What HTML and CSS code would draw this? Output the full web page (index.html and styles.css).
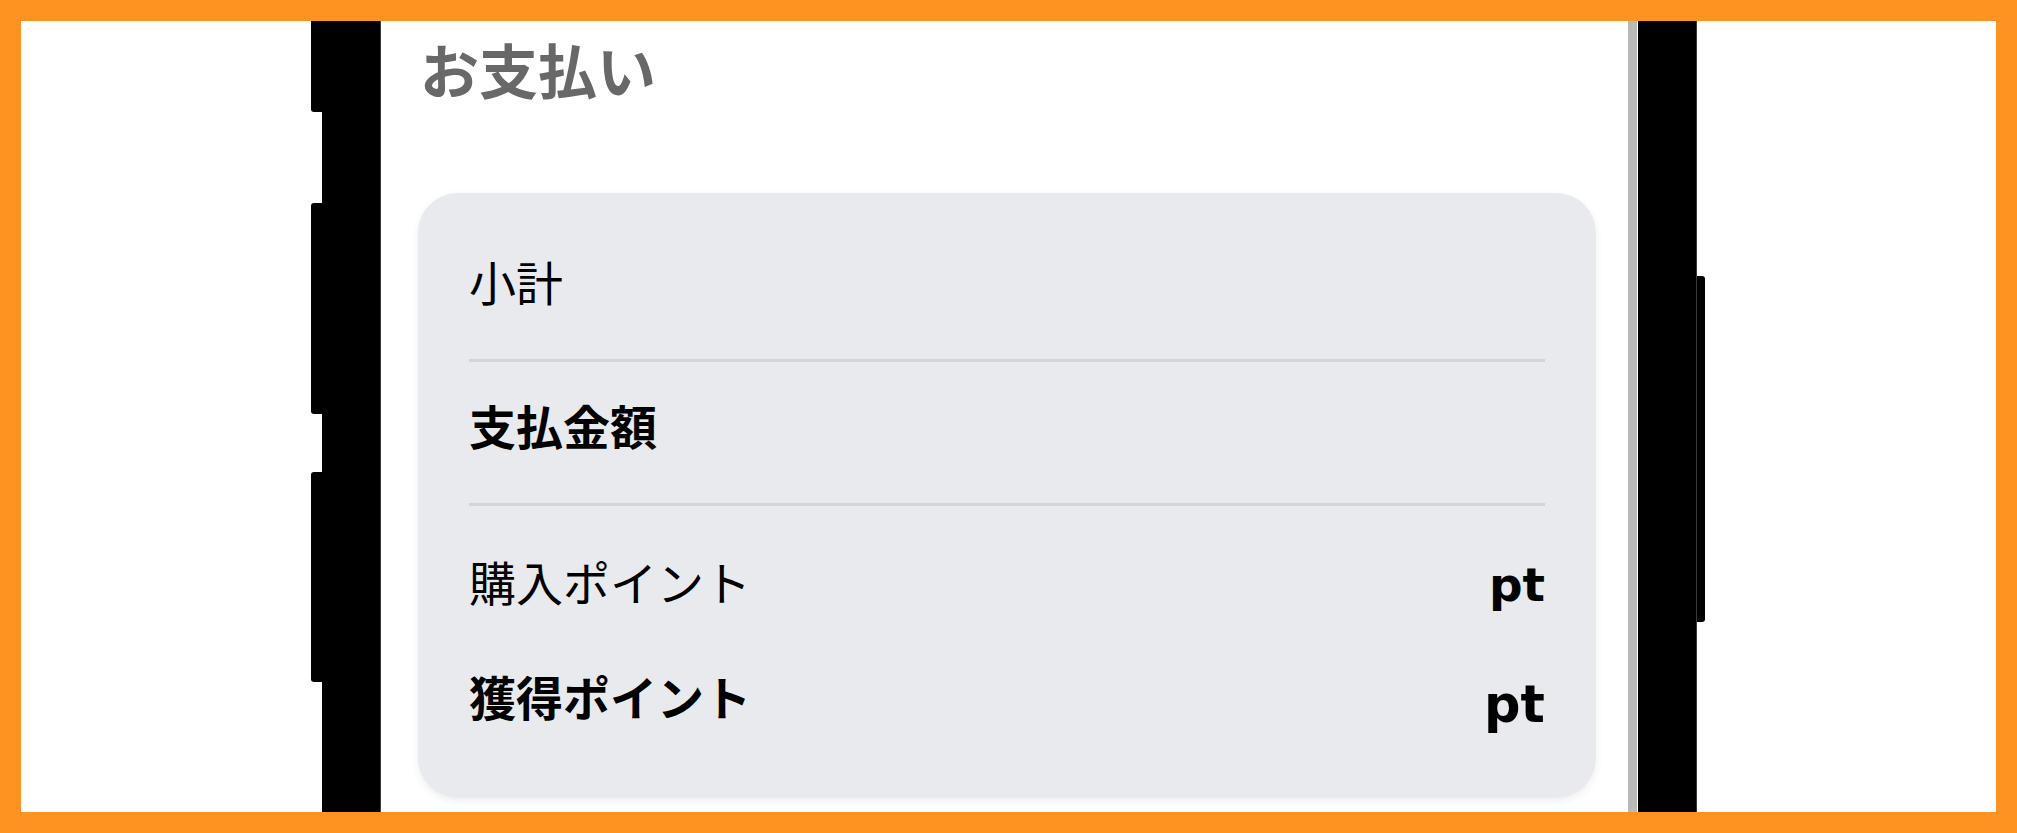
FILE: index.html
```html
<!DOCTYPE html>
<html lang="ja">
<head>
<meta charset="utf-8">
<title>お支払い</title>
<link rel="stylesheet" href="styles.css">
</head>
<body>
<div class="frame">
  <div class="stage">
    <div class="side side-left">
      <div class="keys keys-left">
        <span class="key key-a"></span>
        <span class="key-gap gap-a"></span>
        <span class="key key-b"></span>
        <span class="key-gap gap-b"></span>
        <span class="key key-c"></span>
      </div>
      <div class="bezel bezel-left"></div>
    </div>
    <main class="screen">
      <h1 class="title">お支払い</h1>
      <section class="card">
        <div class="row row-first"><span class="label">小計</span></div>
        <hr class="divider divider-one">
        <div class="row"><span class="label label-bold">支払金額</span></div>
        <hr class="divider divider-two">
        <div class="row row-points"><span class="label">購入ポイント</span><span class="value value-sm">pt</span></div>
        <div class="row row-earned"><span class="label label-bold">獲得ポイント</span><span class="value value-lg">pt</span></div>
      </section>
    </main>
    <div class="scrollbar"></div>
    <div class="side side-right">
      <div class="bezel bezel-right"></div>
      <div class="keys keys-right">
        <span class="key-gap gap-r"></span>
        <span class="key key-r"></span>
      </div>
    </div>
  </div>
</div>
</body>
</html>
```

FILE: styles.css
```css
* {
  box-sizing: border-box;
}

html, body {
  margin: 0;
  padding: 0;
  background: #ff9322;
}

.frame {
  width: 2017px;
  height: 833px;
  border: 21px solid #ff9322;
  background: #ffffff;
  overflow: hidden;
}

.stage {
  display: flex;
  height: 100%;
  padding-left: 290px;
  background: #ffffff;
}

.side {
  display: flex;
  height: 100%;
  flex: none;
}

.keys {
  display: flex;
  flex-direction: column;
  height: 100%;
}

.keys-left {
  width: 11px;
}

.keys-right {
  width: 8px;
}

.key {
  display: block;
  background: #000000;
  flex: none;
}

.key-gap {
  display: block;
  flex: none;
}

.keys-left .key {
  border-radius: 3px 0 0 3px;
}

.keys-right .key {
  border-radius: 0 3px 3px 0;
}

.key-a { height: 91px; border-top-left-radius: 0 !important; }
.gap-a { height: 91px; }
.key-b { height: 211px; }
.gap-b { height: 58px; }
.key-c { height: 210px; }

.gap-r { height: 255px; }
.key-r { height: 346px; }

.bezel {
  width: 59px;
  height: 100%;
  background: #000000;
}

.bezel-left {
  border-right: 1px solid #3a3a3a;
}

.bezel-right {
  border-right: 1px solid #3a3a3a;
}

.scrollbar {
  flex: none;
  width: 9px;
  height: 100%;
  margin-right: 1px;
  background: #b9b9b9;
}

.screen {
  flex: none;
  width: 1247px;
  height: 100%;
  padding: 13px 0 0 37px;
  overflow: hidden;
  background: #ffffff;
  font-family: "Noto Sans CJK JP", "Noto Sans", sans-serif;
}

.title {
  margin: 0 0 89px 2px;
  font-size: 59px;
  line-height: 70px;
  font-weight: 700;
  color: #686868;
}

.card {
  width: 1178px;
  padding: 56px 51px 61px;
  border-radius: 40px;
  background: #e9eaee;
  box-shadow: 0 3px 8px rgba(0, 0, 0, 0.07);
}

.row {
  display: flex;
  justify-content: space-between;
  align-items: flex-start;
  font-size: 47px;
  line-height: 64px;
  color: #000000;
}

.label {
  font-weight: 400;
  white-space: nowrap;
}

.label-bold {
  font-weight: 700;
}

.divider {
  height: 3px;
  border: 0;
  background: #d1d4da;
}

.divider-one {
  margin: 46px 0 31px;
}

.divider-two {
  margin: 46px 0 43px;
}

.value {
  font-family: "DejaVu Sans", "Liberation Sans", sans-serif;
  font-weight: 700;
  line-height: 64px;
  color: #000000;
}

.value-sm {
  font-size: 47px;
  margin-top: 4px;
}

.row-earned {
  margin-top: 47px;
}

.value-lg {
  font-size: 51px;
  margin-top: 9px;
}
```
